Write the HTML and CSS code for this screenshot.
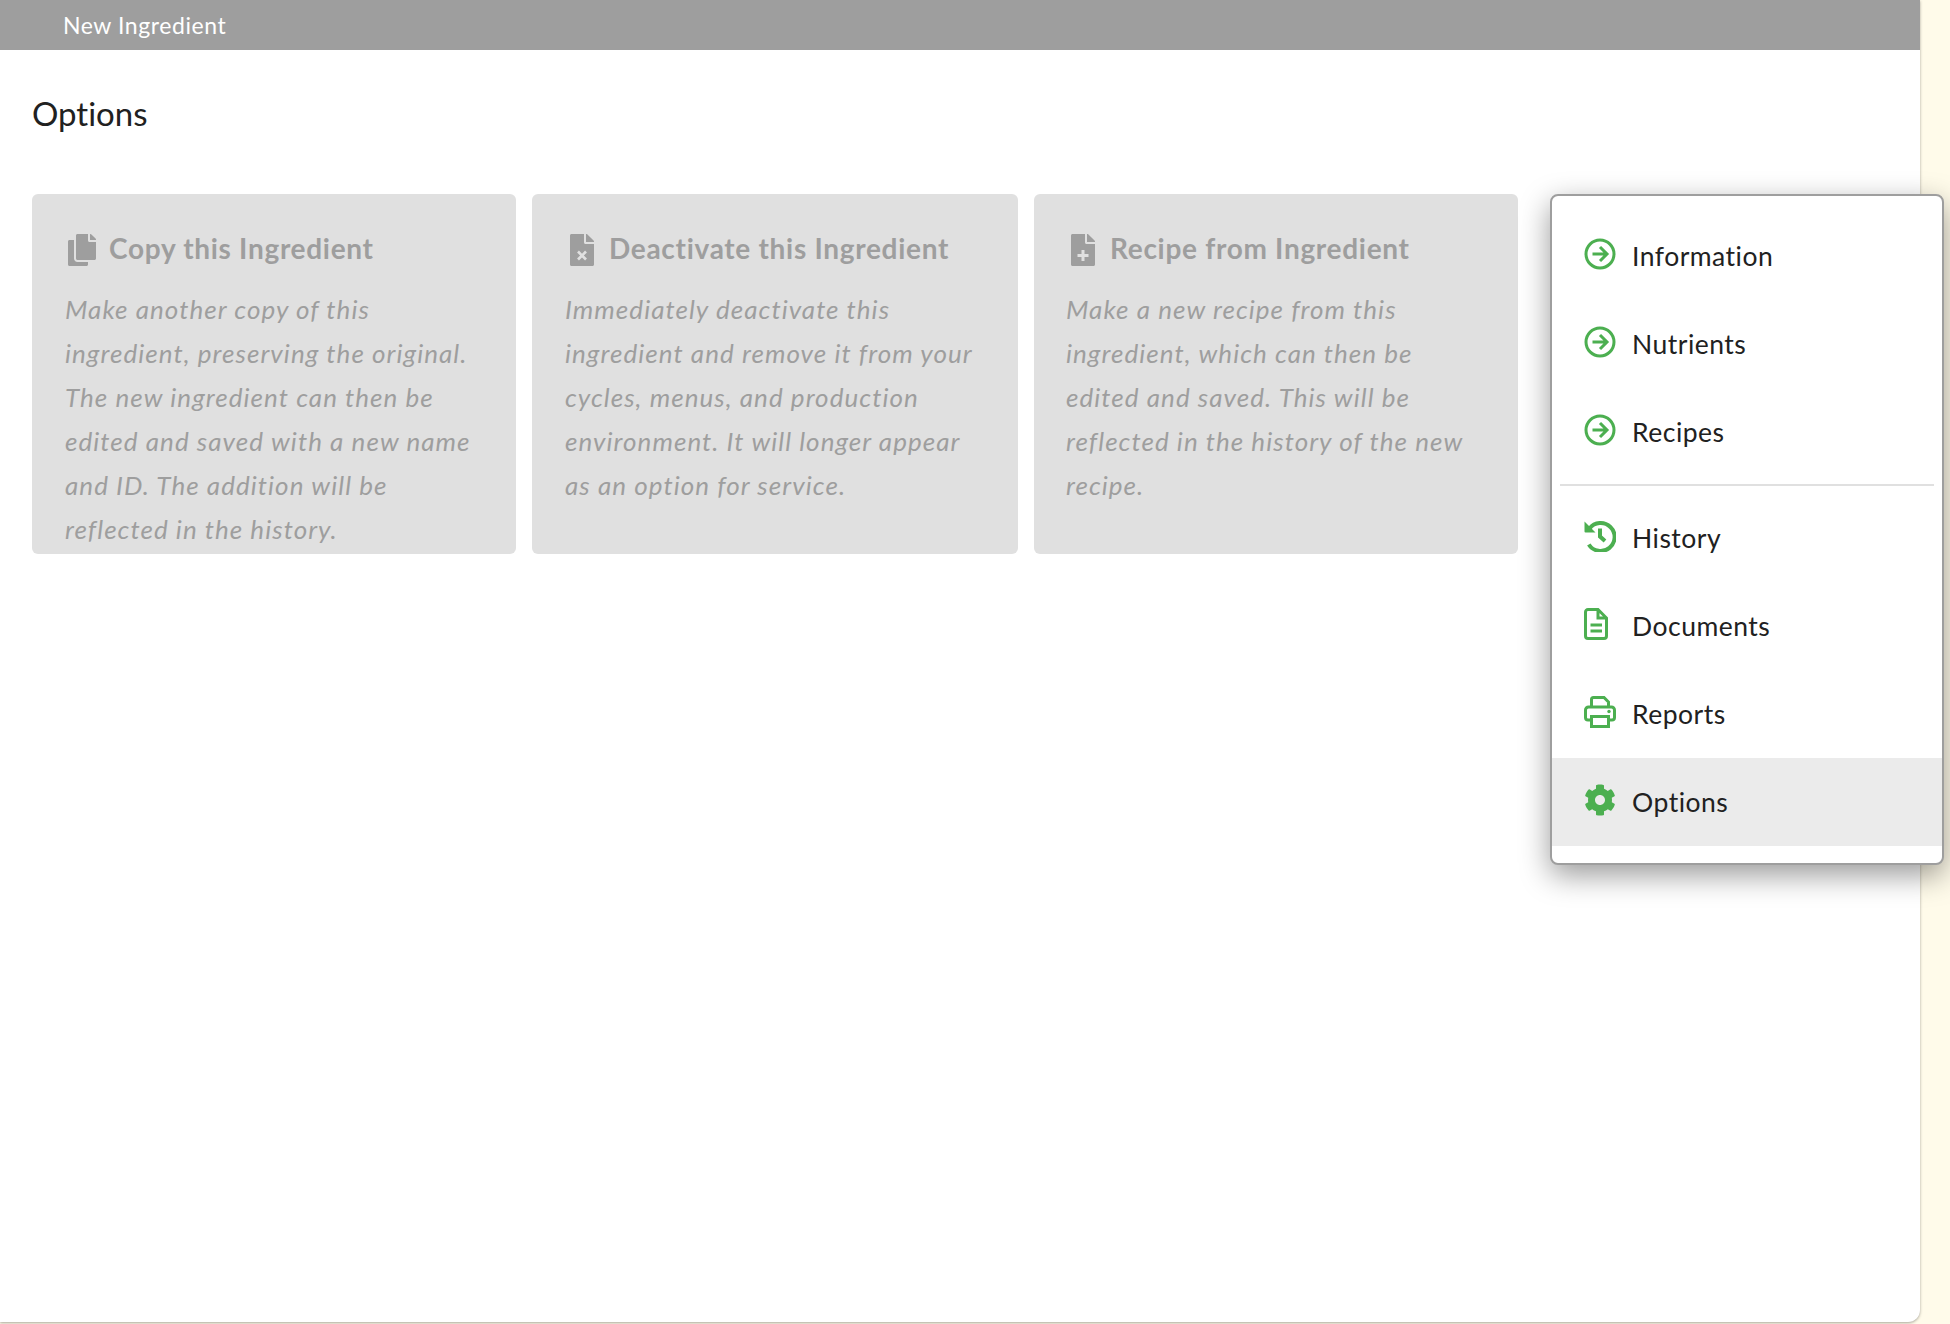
FILE: index.html
```html
<!DOCTYPE html>
<html lang="en">
<head>
    <meta charset="UTF-8">
    <meta name="viewport" content="width=device-width, initial-scale=1.0">
    <title>New Ingredient - Options</title>
    <link rel="stylesheet" href="styles.css">
</head>
<body>
    <div class="panel">
        <header class="topbar">New Ingredient</header>

        <main class="content">
            <h1 class="page-title">Options</h1>

            <div class="option-grid">
                <section class="option-card">
                    <h2 class="option-title">
                        <span class="option-icon">
                            <svg class="icon-copy" viewBox="0 0 448 512"><path d="M320 448v40c0 13.255-10.745 24-24 24H24c-13.255 0-24-10.745-24-24V120c0-13.255 10.745-24 24-24h72v296c0 30.879 25.121 56 56 56h168zm0-344V0H152c-13.255 0-24 10.745-24 24v368c0 13.255 10.745 24 24 24h272c13.255 0 24-10.745 24-24V128H344c-13.2 0-24-10.800-24-24zm120.971-31.029L375.029 7.029A24 24 0 0 0 358.059 0H352v96h96v-6.059a24 24 0 0 0-7.029-16.970z"/></svg>
                        </span>
                        <span class="option-name">Copy this Ingredient</span>
                    </h2>
                    <p class="option-text">Make another copy of this ingredient, preserving the original. The new ingredient can then be edited and saved with a new name and ID. The addition will be reflected in the history.</p>
                </section>

                <section class="option-card">
                    <h2 class="option-title">
                        <span class="option-icon">
                            <svg class="icon-file" viewBox="0 0 384 512"><path fill-rule="evenodd" d="M224 136V0H24C10.700 0 0 10.700 0 24v464c0 13.300 10.700 24 24 24h336c13.300 0 24-10.700 24-24V160H248c-13.200 0-24-10.800-24-24zM143 265l49 49 49-49 30 30-49 49 49 49-30 30-49-49-49 49-30-30 49-49-49-49zM384 121.900V128H256V0h6.100c6.400 0 12.500 2.500 17 7l97.900 98c4.500 4.500 7 10.600 7 16.900z"/></svg>
                        </span>
                        <span class="option-name">Deactivate this Ingredient</span>
                    </h2>
                    <p class="option-text">Immediately deactivate this ingredient and remove it from your cycles, menus, and production environment. It will longer appear as an option for service.</p>
                </section>

                <section class="option-card">
                    <h2 class="option-title">
                        <span class="option-icon">
                            <svg class="icon-file" viewBox="0 0 384 512"><path fill-rule="evenodd" d="M224 136V0H24C10.700 0 0 10.700 0 24v464c0 13.300 10.700 24 24 24h336c13.300 0 24-10.700 24-24V160H248c-13.200 0-24-10.800-24-24zM168 256h48v64h64v48h-64v64h-48v-64h-64v-48h64zM384 121.900V128H256V0h6.100c6.400 0 12.500 2.500 17 7l97.900 98c4.500 4.500 7 10.600 7 16.900z"/></svg>
                        </span>
                        <span class="option-name">Recipe from Ingredient</span>
                    </h2>
                    <p class="option-text">Make a new recipe from this ingredient, which can then be edited and saved. This will be reflected in the history of the new recipe.</p>
                </section>
            </div>
        </main>

        <nav class="side-menu">
            <a class="menu-item">
                <svg class="menu-icon" viewBox="0 0 32 32"><circle class="line" cx="16" cy="16" r="14"/><path class="line" d="M8.500 16h14M16 9l7 7-7 7"/></svg>
                Information
            </a>
            <a class="menu-item">
                <svg class="menu-icon" viewBox="0 0 32 32"><circle class="line" cx="16" cy="16" r="14"/><path class="line" d="M8.500 16h14M16 9l7 7-7 7"/></svg>
                Nutrients
            </a>
            <a class="menu-item">
                <svg class="menu-icon" viewBox="0 0 32 32"><circle class="line" cx="16" cy="16" r="14"/><path class="line" d="M8.500 16h14M16 9l7 7-7 7"/></svg>
                Recipes
            </a>

            <div class="menu-divider"></div>

            <a class="menu-item">
                <svg class="menu-icon" viewBox="0 0 32 32"><path class="line thick" d="M5.500 8.500A14 14 0 1 1 4.800 24.500"/><path class="solid" d="M0.500 1.500l11 11H1.500a1 1 0 0 1-1-1z"/><path class="line thick" d="M16 8.500v8l5 4.500"/></svg>
                History
            </a>
            <a class="menu-item">
                <svg class="menu-icon" viewBox="0 0 32 32"><path class="line" d="M1.500 4a2.500 2.500 0 0 1 2.500-2.500H14L22.500 10v18a2.500 2.500 0 0 1-2.500 2.500H4A2.500 2.500 0 0 1 1.500 28zM14 1.500V10h8.500M6.500 17h11.500M6.500 23h11.500"/></svg>
                Documents
            </a>
            <a class="menu-item">
                <svg class="menu-icon" viewBox="0 0 32 32"><path class="line" d="M7.500 11V3.500a2 2 0 0 1 2-2H20l4.500 4.500V11M7.500 24H4a2.500 2.500 0 0 1-2.500-2.500V14A3 3 0 0 1 4.500 11h23a3 3 0 0 1 3 3v7.500A2.500 2.500 0 0 1 28 24h-3.500M7.500 20.500h17v10h-17z"/><circle class="solid" cx="25" cy="15.500" r="1.700"/></svg>
                Reports
            </a>
            <a class="menu-item menu-item-active">
                <svg class="menu-icon" viewBox="0 0 512 512"><path class="solid" d="M487.400 315.700l-42.600-24.600c4.300-23.200 4.300-47 0-70.200l42.600-24.600c4.900-2.800 7.100-8.600 5.500-14-11.100-35.600-30-67.800-54.700-94.600-3.800-4.100-10-5.100-14.800-2.300L380.800 110c-17.900-15.400-38.500-27.300-60.800-35.100V25.800c0-5.600-3.900-10.500-9.400-11.700-36.700-8.200-74.300-7.800-109.200 0-5.500 1.200-9.400 6.100-9.400 11.700V75c-22.200 7.900-42.800 19.800-60.800 35.100L88.700 85.500c-4.900-2.800-11-1.900-14.800 2.300-24.700 26.700-43.600 58.900-54.700 94.600-1.700 5.400.6 11.200 5.500 14L67.300 221c-4.300 23.200-4.300 47 0 70.200l-42.600 24.600c-4.900 2.800-7.100 8.600-5.500 14 11.100 35.600 30 67.800 54.700 94.600 3.800 4.100 10 5.100 14.800 2.300l42.600-24.600c17.900 15.400 38.500 27.300 60.800 35.100v49.200c0 5.600 3.900 10.500 9.400 11.700 36.700 8.200 74.300 7.800 109.200 0 5.500-1.200 9.400-6.100 9.400-11.700v-49.200c22.200-7.900 42.800-19.800 60.800-35.100l42.600 24.600c4.900 2.800 11 1.900 14.800-2.300 24.700-26.700 43.600-58.900 54.700-94.600 1.500-5.500-.7-11.300-5.600-14.100zM256 336c-44.100 0-80-35.900-80-80s35.900-80 80-80 80 35.900 80 80-35.900 80-80 80z"/></svg>
                Options
            </a>
        </nav>
    </div>
</body>
</html>
```

FILE: styles.css
```css
* {
    margin: 0;
    padding: 0;
    box-sizing: border-box;
}

html, body {
    height: 100%;
    overflow: hidden;
}

body {
    font-family: Lato, "Open Sans", sans-serif;
    font-variant-ligatures: none;
    background: #fffbea;
    color: #212121;
}

.panel {
    width: 1920px;
    height: 1322px;
    background: #fff;
    border-bottom-right-radius: 12px;
    box-shadow: 0 1px 3px rgba(0, 0, 0, 0.35);
    position: relative;
}

/* Top bar */
.topbar {
    height: 50px;
    line-height: 50px;
    padding-left: 63px;
    background: #9e9e9e;
    color: #fff;
    font-size: 23px;
    letter-spacing: 0.57px;
}

/* Content */
.content {
    padding: 0 32px;
}

.page-title {
    height: 144px;
    padding-top: 39px;
    font-size: 33px;
    line-height: 48px;
    font-weight: 400;
}

.option-grid {
    display: grid;
    grid-template-columns: 484px 486px 484px;
    gap: 16px;
}

.option-card {
    background: #e0e0e0;
    color: #9e9e9e;
    border-radius: 6px;
    padding: 40px 38px 3px 33px;
}

.option-card:last-child {
    padding-left: 32px;
}

.option-title {
    display: flex;
    align-items: center;
    height: 32px;
    font-size: 28px;
    font-weight: 700;
    letter-spacing: 0.7px;
    white-space: nowrap;
}

.option-name {
    padding-bottom: 5px;
}

.option-icon {
    width: 34px;
    margin-right: 10px;
    display: flex;
    justify-content: center;
}

.option-icon svg {
    height: 32px;
    fill: #9e9e9e;
}

.icon-copy {
    width: 28px;
}

.icon-file {
    width: 24px;
}

.option-text {
    margin-top: 21px;
    font-size: 26px;
    line-height: 44px;
    font-style: italic;
    letter-spacing: 1.05px;
}

/* Side menu */
.side-menu {
    position: absolute;
    top: 194px;
    left: 1550px;
    width: 394px;
    height: 671px;
    padding: 16px 0;
    background: #fff;
    border: 2px solid #9e9e9e;
    border-radius: 8px;
    box-shadow: 0 10px 30px rgba(0, 0, 0, 0.4);
}

.menu-item {
    display: flex;
    align-items: center;
    height: 88px;
    padding-left: 32px;
    font-size: 26.5px;
    letter-spacing: 0.5px;
}

.menu-item-active {
    background: #ebebeb;
}

.menu-divider {
    height: 2px;
    margin: 8px 8px;
    background: #e0e0e0;
}

.menu-icon {
    width: 32px;
    height: 32px;
    margin-right: 16px;
    margin-top: -4px;
    flex-shrink: 0;
}

.line {
    fill: none;
    stroke: #4caf50;
    stroke-width: 3;
}

.thick {
    stroke-width: 4;
}

.solid {
    fill: #4caf50;
}
```
